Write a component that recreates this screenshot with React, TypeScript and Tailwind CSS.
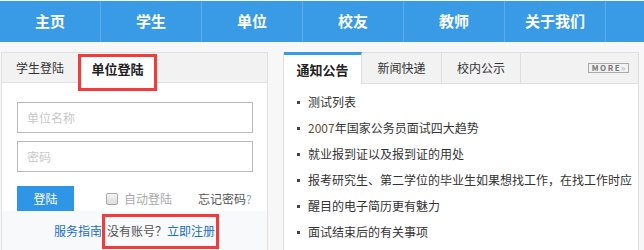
const navItems = ["主页", "学生", "单位", "校友", "教师", "关于我们"];

const news = [
  "测试列表",
  "2007年国家公务员面试四大趋势",
  "就业报到证以及报到证的用处",
  "报考研究生、第二学位的毕业生如果想找工作，在找工作时应",
  "醒目的电子简历更有魅力",
  "面试结束后的有关事项",
];

function NewsTitle({ text }: { text: string }) {
  if (text.startsWith("2007")) {
    return (
      <>
        <span className="text-[#6e4a33]">2007</span>
        {text.slice(4)}
      </>
    );
  }
  return <>{text}</>;
}

export default function App() {
  return (
    <div
      className="relative h-[250px] w-[644px] overflow-hidden bg-[#f7f7f7] pt-px text-[#333]"
      style={{ fontFamily: '"Noto Sans CJK SC", "Liberation Sans", sans-serif' }}
    >
      {/* top nav */}
      <nav className="flex h-[41px] bg-[#399ae5]">
        {navItems.map((item) => (
          <a
            key={item}
            className="flex w-[101px] items-center justify-center border-r border-[#5dade9] text-[15px] font-bold text-white"
          >
            {item}
          </a>
        ))}
      </nav>

      <div className="mt-[10px] flex gap-[15px] pl-px">
        {/* login box */}
        <div className="flex h-[220px] w-[267px] flex-col border border-[#e0e0e0] bg-white">
          <div className="flex h-[30px] border-b border-[#e0e0e0] bg-[#f2f2f2] text-[12px]">
            <div className="flex w-[76px] items-center justify-center text-[#333]">学生登陆</div>
            <div className="flex h-[31px] w-[79px] items-center justify-center bg-white text-[13px] font-bold text-[#222]">
              单位登陆
            </div>
          </div>

          <div className="pl-[15px] pr-[14px] pt-[19px]">
            <input
              className="block h-[31px] w-[236px] border border-[#b9b9b9] px-[9px] text-[12px] outline-none placeholder:text-[#c8c8c8]"
              placeholder="单位名称"
            />
            <input
              type="password"
              className="mt-[8px] block h-[31px] w-[236px] border border-[#b9b9b9] px-[9px] text-[12px] outline-none placeholder:text-[#c8c8c8]"
              placeholder="密码"
            />
            <div className="mt-[14px] flex h-[25px] items-center whitespace-nowrap text-[12px]">
              <button className="h-[25px] w-[57px] shrink-0 bg-[#2f95e6] text-white">登陆</button>
              <label className="ml-[32px] flex shrink-0 items-center gap-[6px] text-[#aaa]">
                <span className="h-[12px] w-[12px] rounded-[2px] border border-[#aaa] bg-gradient-to-b from-[#f4f4f4] to-[#dcdcdc]" />
                自动登陆
              </label>
              <span className="ml-[26px] shrink-0 text-[#555]">
                忘记密码<span className="text-[#8fa3b8]">?</span>
              </span>
            </div>
          </div>

          <div className="flex-1 bg-[#f8f9fb] pt-[10px] text-center text-[12px] leading-[20px]">
            <a className="text-[#1a6fc9]">服务指南</a>
            <span className="ml-[5px] text-[#555]">没有账号？</span>
            <a className="text-[#1a6fc9]">立即注册</a>
          </div>
        </div>

        {/* news box */}
        <div className="h-[220px] w-[356px] border border-[#dedede] bg-white">
          <div className="flex h-[31px] border-b border-[#dedede] bg-[#f2f2f2] text-[12px]">
            <div className="-mt-px flex h-[32px] w-[78px] items-center justify-center border-r border-t-[3px] border-r-[#dedede] border-t-[#399ae5] bg-white text-[13px] font-bold text-[#222]">
              通知公告
            </div>
            <div className="flex w-[80px] items-center justify-center border-r border-[#dedede]">新闻快递</div>
            <div className="flex w-[79px] items-center justify-center border-r border-[#dedede]">校内公示</div>
            <div className="ml-auto mr-[9px] flex items-center">
              <span className="flex h-[10px] w-[41px] items-center justify-center border border-[#aaa] text-[8px] font-bold leading-none tracking-[1.5px] text-[#777]">
                MORE<span className="tracking-normal text-[#bbb]">»</span>
              </span>
            </div>
          </div>
          <ul className="pl-[13px] pt-[5px] text-[12px]">
            {news.map((n) => (
              <li key={n} className="flex h-[26px] items-center overflow-hidden whitespace-nowrap">
                <span className="mr-[8px] h-[3px] w-[3px] shrink-0 bg-[#444]" />
                <NewsTitle text={n} />
              </li>
            ))}
          </ul>
        </div>
      </div>

      {/* red annotation boxes */}
      <div className="pointer-events-none absolute left-[78px] top-[54px] h-[37px] w-[79px] border-[3px] border-[#f23c3c]" />
      <div className="pointer-events-none absolute left-[102px] top-[214px] h-[35px] w-[117px] border-[3px] border-[#f23c3c]" />
    </div>
  );
}
